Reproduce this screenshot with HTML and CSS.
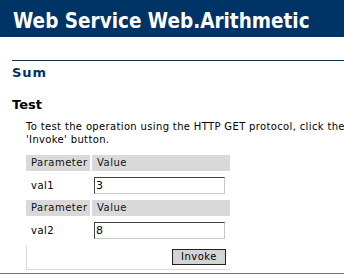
FILE: index.html
```html
<!DOCTYPE html>
<html>
<head>
<meta charset="utf-8">
<link rel="stylesheet" href="styles.css">
</head>
<body>
<div class="banner">Web Service Web.Arithmetic</div>
<div class="content">
  <div class="rule"></div>
  <h2 class="op">Sum</h2>
  <h3 class="sub">Test</h3>
  <p class="intro">To test the operation using the HTTP GET protocol, click the 'Invoke' button.</p>
  <div class="form">
    <div class="hd">Parameter</div><div class="hd">Value</div>
    <div class="name">val1</div><div class="val"><div class="input">3</div></div>
    <div class="hd">Parameter</div><div class="hd">Value</div>
    <div class="name">val2</div><div class="val"><div class="input">8</div></div>
    <div class="actions"><div class="btn">Invoke</div></div>
  </div>
</div>
<div class="bottom"></div>
</body>
</html>
```
FILE: styles.css
```css
html, body { margin: 0; padding: 0; background: #fff; }
body { font-family: "DejaVu Sans", Verdana, sans-serif; color: #000; width: 344px; height: 276px; overflow: hidden; }
.banner {
  background: #003366; color: #fff; height: 37px; box-sizing: border-box;
  padding: 9px 0 0 13px; font-family: "DejaVu Sans Condensed", "DejaVu Sans", sans-serif;
  font-weight: bold; font-size: 20.5px; line-height: 24px; white-space: nowrap;
}
.content { padding-left: 12px; }
.rule { height: 1px; background: #1b2f4f; margin-top: 23px; }
.op { margin: 5px 0 0 0; font-size: 13px; line-height: 14px; color: #003366; font-weight: bold; letter-spacing: 1px; }
.sub { margin: 18px 0 0 0; font-size: 13px; line-height: 14px; font-weight: bold; }
.intro { margin: 8px 0 0 14px; font-size: 10px; letter-spacing: 0.35px; line-height: 13px; color: #000; width: 320px; }
.form {
  margin: 9px 0 0 14px; width: 204px; display: grid; grid-template-columns: 64px 138px;
  column-gap: 2px; font-size: 10px; letter-spacing: 0.5px;
}
.hd { background: #d9d9d9; height: 16px; line-height: 16px; padding-left: 5px; color: #111; }
.name { height: 29px; line-height: 29px; padding-left: 5px; }
.val { height: 29px; padding: 6px 0 0 2px; box-sizing: border-box; }
.input {
  width: 131px; height: 17px; box-sizing: border-box; border: 1px solid #c8c8c8; border-top-color: #404040; border-left-color: #404040;
  font-size: 11px; line-height: 15px; padding-left: 1px; letter-spacing: 0;
}
.actions { grid-column: 1 / 3; height: 25px; border-left: 1px solid #dcdcdc; border-bottom: 1px solid #dcdcdc; display: flex; justify-content: flex-end; padding: 4px 4px 0 0; box-sizing: border-box; }
.btn { width: 54px; height: 16px; box-sizing: border-box; background: #d4d4d4; border: 1px solid #000; border-top-color: #fff; border-left-color: #fff; outline: 1px solid #222; outline-offset: -1px; text-align: center; font-size: 10px; line-height: 14px; }
.bottom { height: 1px; background: #cc33cc; margin-top: 3px; }
```
